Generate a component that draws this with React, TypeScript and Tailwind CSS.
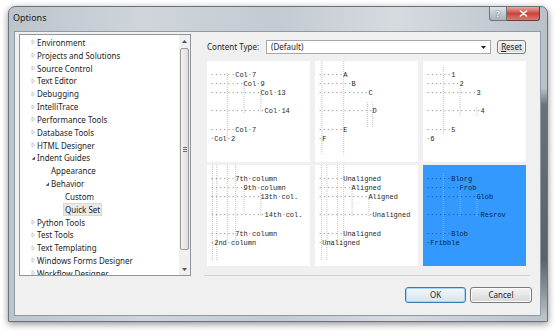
import React from "react";

const ui = "font-['Noto_Sans',sans-serif]";
const mono = "font-['Liberation_Mono','DejaVu_Sans_Mono',monospace]";

type TreeItem = { label: string; level: 0 | 1 | 2; state: "closed" | "open" | "leaf"; selected?: boolean };

const treeItems: TreeItem[] = [
  { label: "Environment", level: 0, state: "closed" },
  { label: "Projects and Solutions", level: 0, state: "closed" },
  { label: "Source Control", level: 0, state: "closed" },
  { label: "Text Editor", level: 0, state: "closed" },
  { label: "Debugging", level: 0, state: "closed" },
  { label: "IntelliTrace", level: 0, state: "closed" },
  { label: "Performance Tools", level: 0, state: "closed" },
  { label: "Database Tools", level: 0, state: "closed" },
  { label: "HTML Designer", level: 0, state: "closed" },
  { label: "Indent Guides", level: 0, state: "open" },
  { label: "Appearance", level: 1, state: "leaf" },
  { label: "Behavior", level: 1, state: "open" },
  { label: "Custom", level: 2, state: "leaf" },
  { label: "Quick Set", level: 2, state: "leaf", selected: true },
  { label: "Python Tools", level: 0, state: "closed" },
  { label: "Test Tools", level: 0, state: "closed" },
  { label: "Text Templating", level: 0, state: "closed" },
  { label: "Windows Forms Designer", level: 0, state: "closed" },
  { label: "Workflow Designer", level: 0, state: "closed" },
];

const levelPad = { 0: "pl-[10px]", 1: "pl-[24px]", 2: "pl-[38px]" };

type Guide = { c: number; y1: number; y2: number };
type Preview = { lines: string[]; guides: Guide[]; blue?: boolean };

const previews: Preview[] = [
  {
    lines: ["······Col·7", "········Col·9", "············Col·13", "", "·············Col·14", "", "······Col·7", "·Col·2"],
    guides: [
      { c: 4, y1: 12, y2: 78 },
      { c: 8, y1: 21, y2: 52 },
      { c: 12, y1: 28, y2: 52 },
    ],
  },
  {
    lines: ["······A", "········B", "············C", "", "·············D", "", "······E", "·F"],
    guides: [
      { c: 0.8, y1: 0, y2: 93 },
      { c: 6, y1: 0, y2: 93 },
      { c: 11.7, y1: 41, y2: 66 },
      { c: 12.9, y1: 41, y2: 66 },
    ],
  },
  {
    lines: ["······1", "········2", "············3", "", "·············4", "", "······5", "·6"],
    guides: [
      { c: 4, y1: 6, y2: 74 },
      { c: 8, y1: 27, y2: 54 },
      { c: 12, y1: 46, y2: 55 },
    ],
  },
  {
    lines: [
      "······7th·column",
      "········9th·column",
      "············13th·col.",
      "",
      "·············14th·col.",
      "",
      "······7th·column",
      "·2nd·column",
    ],
    guides: [
      { c: 0.5, y1: 0, y2: 96 },
      { c: 1.5, y1: 0, y2: 96 },
      { c: 4, y1: 0, y2: 76 },
      { c: 6, y1: 0, y2: 76 },
      { c: 8, y1: 20, y2: 50 },
      { c: 12, y1: 28, y2: 52 },
    ],
  },
  {
    lines: [
      "······Unaligned",
      "········Aligned",
      "············Aligned",
      "",
      "·············Unaligned",
      "",
      "······Unaligned",
      "·Unaligned",
    ],
    guides: [
      { c: 0.7, y1: 0, y2: 96 },
      { c: 2, y1: 0, y2: 96 },
      { c: 4.5, y1: 0, y2: 76 },
      { c: 6, y1: 0, y2: 76 },
      { c: 8, y1: 20, y2: 52 },
      { c: 12, y1: 30, y2: 52 },
    ],
  },
  {
    lines: ["······Blorg", "········Frob", "············Glob", "", "·············Resrov", "", "······Blob", "·Fribble"],
    guides: [
      { c: 4, y1: 8, y2: 76 },
      { c: 8, y1: 20, y2: 52 },
      { c: 12, y1: 28, y2: 52 },
    ],
    blue: true,
  },
];

const CW = 4.2;

function Arrow({ state }: { state: TreeItem["state"] }) {
  if (state === "closed")
    return (
      <svg width="7" height="8" viewBox="0 0 7 8">
        <path d="M2 1.8 L4.8 4 L2 6.2 Z" fill="#fff" stroke="#b4b4b4" strokeWidth="0.7" />
      </svg>
    );
  if (state === "open")
    return (
      <svg width="7" height="8" viewBox="0 0 7 8">
        <path d="M5 2.5 L5 5.8 L1.7 5.8 Z" fill="#444" />
      </svg>
    );
  return <span className="w-[7px]" />;
}

function Line({ text, blue }: { text: string; blue?: boolean }) {
  const runs: { dot: boolean; s: string }[] = [];
  for (const ch of text) {
    const dot = ch === "·";
    const last = runs[runs.length - 1];
    if (last && last.dot === dot) last.s += ch;
    else runs.push({ dot, s: ch });
  }
  return (
    <div className="h-[9.2px] whitespace-pre leading-[9.2px]">
      {runs.map((r, i) => (
        <span
          key={i}
          className={r.dot ? (blue ? "text-[#1b3f78]" : "text-[#6e6e6e]") : blue ? "text-[#0b1f45]" : "text-[#262626]"}
        >
          {r.s}
        </span>
      ))}
    </div>
  );
}

function PreviewCard({ p }: { p: Preview }) {
  return (
    <div className={`relative h-[101px] overflow-hidden ${p.blue ? "bg-[#3399ff]" : "bg-white"}`}>
      <svg className="pointer-events-none absolute inset-0" width="104" height="101">
        {p.guides.map((g, i) => (
          <line
            key={i}
            x1={3 + g.c * CW + 0.5}
            x2={3 + g.c * CW + 0.5}
            y1={g.y1}
            y2={g.y2}
            stroke={p.blue ? "rgba(255,255,255,0.35)" : "#c4c4c4"}
            strokeWidth="1"
            strokeDasharray="1 1"
          />
        ))}
      </svg>
      <div className={`relative pl-[3px] pt-[9.5px] text-[7px] ${mono}`}>
        {p.lines.map((l, i) => (
          <Line key={i} text={l} blue={p.blue} />
        ))}
      </div>
    </div>
  );
}

function Tree() {
  return (
    <div className="flex h-[242px] w-[172px] border border-[#8e959c] bg-white">
      <div className={`flex-1 overflow-hidden pt-[1px] text-[8px] text-[#1e1e1e] ${ui}`}>
        {treeItems.map((t) => (
          <div key={t.label} className={`flex h-[12.83px] items-center ${levelPad[t.level]}`}>
            <Arrow state={t.state} />
            <span
              className={`leading-[11px] ${
                t.selected ? "-ml-[2px] border border-[#d9d9d9] bg-[#e9e9e9] px-[1px]" : ""
              }`}
            >
              {t.label}
            </span>
          </div>
        ))}
      </div>
      <div className="flex w-[11px] flex-col bg-[#f0f0f0]">
        <div className="flex h-[12px] items-center justify-center">
          <svg width="5" height="3" viewBox="0 0 5 3">
            <path d="M0 3 L2.5 0 L5 3 Z" fill="#505050" />
          </svg>
        </div>
        <div className="flex-1 px-[1px] pt-[1px]">
          <div className="flex h-[202px] items-center justify-center rounded-[2px] border border-[#9a9a9a] bg-gradient-to-r from-[#f3f3f3] to-[#dcdcdc]">
            <div className="flex flex-col gap-[1px]">
              <div className="h-px w-[4px] bg-[#6a6a6a]" />
              <div className="h-px w-[4px] bg-[#6a6a6a]" />
              <div className="h-px w-[4px] bg-[#6a6a6a]" />
            </div>
          </div>
        </div>
        <div className="flex h-[12px] items-center justify-center">
          <svg width="5" height="3" viewBox="0 0 5 3">
            <path d="M0 0 L2.5 3 L5 0 Z" fill="#505050" />
          </svg>
        </div>
      </div>
    </div>
  );
}

function Button({ label, primary, underline }: { label: string; primary?: boolean; underline?: boolean }) {
  return (
    <div
      className={`flex h-full items-center justify-center rounded-[3px] border text-[8px] text-[#1e1e1e] ${ui} ${
        primary
          ? "border-[#3b7cb0] bg-gradient-to-b from-[#f3f8fb] to-[#d6e5ef] shadow-[inset_0_0_0_1px_#a8d6f2]"
          : "border-[#7a7a7a] bg-gradient-to-b from-[#f4f4f4] to-[#d8d8d8] shadow-[inset_0_0_0_1px_#fbfbfb]"
      }`}
    >
      {underline ? (
        <span>
          <span className="underline">{label[0]}</span>
          {label.slice(1)}
        </span>
      ) : (
        label
      )}
    </div>
  );
}

export default function App() {
  return (
    <div className="h-[332px] w-[557px] overflow-hidden bg-white pl-[8px] pt-[6px]">
      <div className="flex h-[316px] w-[540px] flex-col rounded-t-[7px] border border-[#6c7279] bg-[linear-gradient(90deg,#bcc4cc_0%,#cfd5db_25%,#c3cad1_50%,#d6dbe0_72%,#b9c1c9_100%)] shadow-[0_2px_7px_rgba(0,0,0,0.45)]">
        {/* title bar */}
        <div className="flex h-[24px] items-start pl-[4px] pr-[7px]">
          <span className={`mt-[5px] text-[9px] leading-[12px] text-[#1a1a1a] ${ui}`}>Options</span>
          <div className="ml-auto flex">
            <div className="flex h-[14px] w-[18px] items-center justify-center rounded-bl-[3px] border border-t-0 border-[#6e767e] bg-gradient-to-b from-[#dfe4e8] to-[#aab3bb]">
              <span className={`text-[8px] font-bold leading-none text-white [text-shadow:0_0_2px_#333] ${ui}`}>?</span>
            </div>
            <div className="flex h-[14px] w-[33px] items-center justify-center rounded-br-[3px] border border-l-0 border-t-0 border-[#6b3a3a] bg-gradient-to-b from-[#e8a8a0] via-[#c8453c] to-[#d97a6e]">
              <svg width="9" height="7" viewBox="0 0 9 7">
                <path d="M1.5 1 L7.5 6 M7.5 1 L1.5 6" stroke="#fff" strokeWidth="1.6" strokeLinecap="round" />
              </svg>
            </div>
          </div>
        </div>

        <div className="flex h-[285px]">
          <div className="w-[5px]" />
          {/* client */}
          <div className="flex w-[527px] flex-col border border-[#8f9aa4] bg-[#f0f0f0]">
            <div className="flex h-[244px] pl-[4px] pt-[2px]">
              <Tree />
              <div className="ml-[13px] flex w-[326px] flex-col">
                <div className={`mt-[6px] flex h-[14px] items-center pl-[3px] pr-[4px] text-[8px] text-[#1e1e1e] ${ui}`}>
                  <span className="w-[59px]">Content Type:</span>
                  <div className="flex h-[14px] flex-1 items-center border border-[#a7a7a7] bg-white pl-[4px] pr-[4px]">
                    <span>(Default)</span>
                    <svg className="ml-auto" width="5" height="3" viewBox="0 0 5 3">
                      <path d="M0 0 L2.5 3 L5 0 Z" fill="#1e1e1e" />
                    </svg>
                  </div>
                  <div className="ml-[6px] h-[14px] w-[29px]">
                    <Button label="Reset" underline />
                  </div>
                </div>
                <div className="mt-[4px] flex-1 border-b border-[#d2d2d2] pl-[3px] pr-[4px] pt-[3px]">
                  <div className="grid grid-cols-3 gap-x-[5px] gap-y-[3px]">
                    {previews.map((p, i) => (
                      <PreviewCard key={i} p={p} />
                    ))}
                  </div>
                </div>
              </div>
            </div>
            <div className="mt-[11px] flex h-[16px] justify-end gap-[4px] pr-[8px]">
              <div className="w-[61px]">
                <Button label="OK" primary />
              </div>
              <div className="w-[62px]">
                <Button label="Cancel" />
              </div>
            </div>
          </div>
          <div className="w-[6px] bg-[linear-gradient(180deg,transparent_0%,transparent_20%,#6a7177_26%,#5a6167_80%,#8f969c_92%,transparent_100%)]" />
        </div>
        <div className="h-[5px]" />
      </div>
    </div>
  );
}
